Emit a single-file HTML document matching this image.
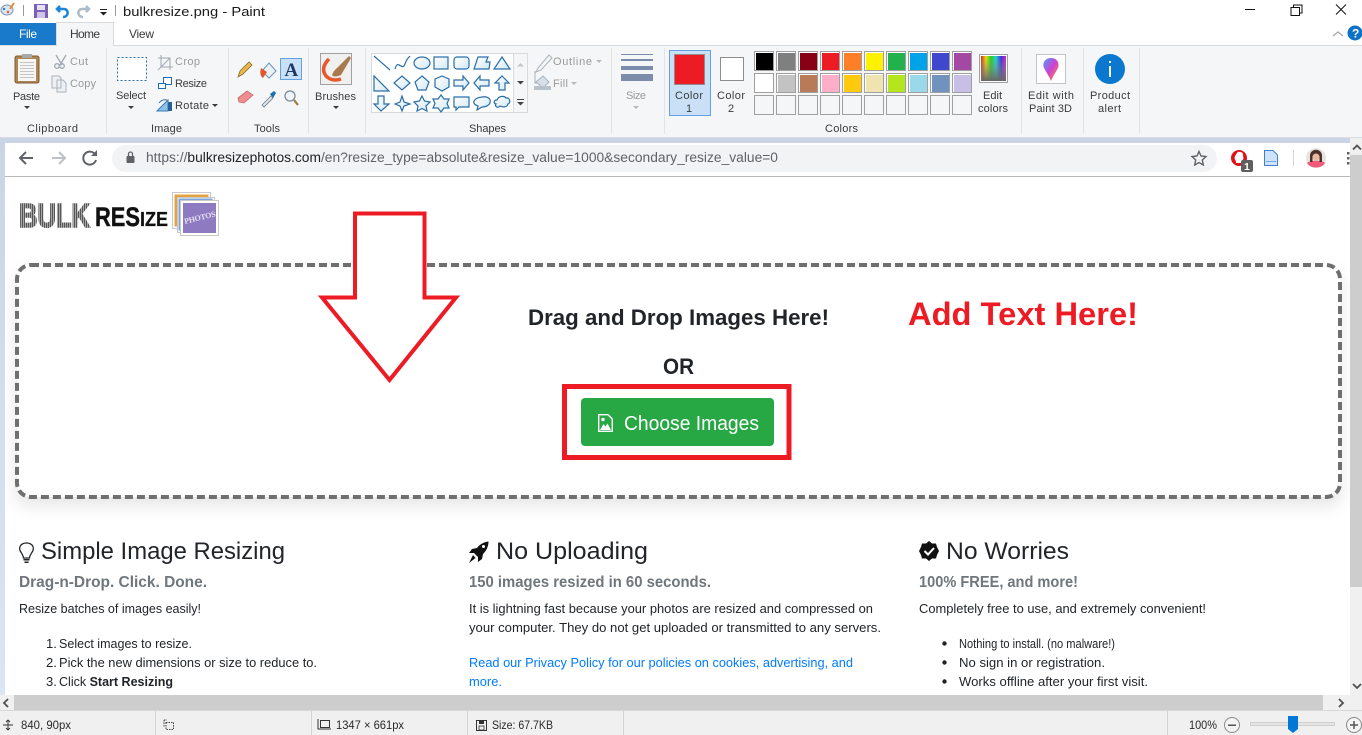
<!DOCTYPE html>
<html><head><meta charset="utf-8"><title>bulkresize.png - Paint</title>
<style>
html,body{margin:0;padding:0;width:1362px;height:735px;overflow:hidden;background:#fff}
svg{display:block}
text{font-family:"Liberation Sans",sans-serif;white-space:pre}
.r{font-size:11px;fill:#3b3b3b}
.d{font-size:11px;fill:#9a9a9a}
.p{font-size:13px;fill:#212529}
.h{font-size:24px;fill:#212529}
.s{font-size:16px;font-weight:bold;fill:#6f767c}
.l{font-size:13px;fill:#007bff}
.st{font-size:12px;fill:#2a2a2a}
.sh{fill:url(#g);stroke:#2a6ea8;stroke-width:1.2}
</style></head><body>
<svg width="1362" height="735" viewBox="0 0 1362 735" xmlns="http://www.w3.org/2000/svg">
<defs>
<linearGradient id="g" x1="0" y1="0" x2="1" y2="1"><stop offset="0" stop-color="#fff"/><stop offset="1" stop-color="#d3e9f5"/></linearGradient>
<linearGradient id="rb" x1="0" y1="0" x2="1" y2="0"><stop offset="0" stop-color="#e02020"/><stop offset=".2" stop-color="#e8e000"/><stop offset=".4" stop-color="#20d020"/><stop offset=".6" stop-color="#20d0d0"/><stop offset=".8" stop-color="#3030e0"/><stop offset="1" stop-color="#e020c0"/></linearGradient>
<linearGradient id="gr" x1="0" y1="0" x2="0" y2="1"><stop offset="0" stop-color="#999" stop-opacity="0"/><stop offset="1" stop-color="#666"/></linearGradient>
<linearGradient id="dr" x1="0" y1="0" x2="1" y2="1"><stop offset="0" stop-color="#4aa0ff"/><stop offset=".5" stop-color="#d040d0"/><stop offset="1" stop-color="#ffa020"/></linearGradient>
<linearGradient id="strip" x1="0" y1="0" x2="0" y2="1"><stop offset="0" stop-color="#c9d5e6"/><stop offset="1" stop-color="#dbe6f4"/></linearGradient>
<pattern id="stripe" width="2" height="2" patternUnits="userSpaceOnUse"><rect width="2" height="2" fill="#a8a8a8"/><rect width="1" height="2" fill="#555"/></pattern>
<filter id="blur" x="-5%" y="-15%" width="110%" height="130%"><feGaussianBlur stdDeviation="8"/></filter>
<clipPath id="pg"><rect x="5" y="177" width="1345" height="518"/></clipPath>
</defs>

<!-- title bar -->
<rect width="1362" height="46" fill="#fff"/>
<g>
<ellipse cx="7" cy="10" rx="6" ry="5" fill="#dfe7ee" stroke="#7d97b5"/><circle cx="4" cy="9" r="1.2" fill="#2a7ad0"/><circle cx="8" cy="12" r="1.2" fill="#e05050"/><path d="M10 9 L14 3" stroke="#e09030" stroke-width="2"/>
<rect x="23" y="5" width="1" height="11" fill="#9a9a9a"/>
<rect x="34" y="4" width="14" height="14" fill="#7a5fb8"/><rect x="37" y="5" width="8" height="5" fill="#e6e0f4"/><rect x="37" y="12" width="8" height="6" fill="#cfc5e6"/>
<path d="M60 6 L57 9 L60 12 M58 9 H64 C69 9 69 17 63 17" fill="none" stroke="#1f86d6" stroke-width="2.6"/>
<path d="M86 6 L89 9 L86 12 M88 9 H82 C77 9 77 17 83 17" fill="none" stroke="#aebccb" stroke-width="2.6"/>
<rect x="100" y="9" width="7" height="1" fill="#222"/><path d="M100 12 H107 L103.500 15.500Z" fill="#222"/>
<rect x="115" y="5" width="1" height="11" fill="#9a9a9a"/>
</g>
<text x="123" y="16" font-size="12.500" fill="#1a1a1a" textLength="142" lengthAdjust="spacingAndGlyphs">bulkresize.png - Paint</text>
<rect x="1245" y="9" width="10" height="1" fill="#111"/>
<path d="M1291 7.500H1299.500V15.500H1291ZM1293.500 7.500V5H1302V13H1299.500" fill="none" stroke="#111"/>
<path d="M1336 4.500L1346 14.500M1346 4.500L1336 14.500" stroke="#111" fill="none"/>

<!-- tabs -->
<rect x="0" y="23" width="56" height="22" fill="#1979ca"/>
<text x="19" y="38" font-size="12" fill="#fff" textLength="18">File</text>
<path d="M56.500 45V22.500H113.500V45" fill="#f5f6f7" stroke="#dadbdc"/>
<text x="70" y="38" font-size="12" fill="#3b3b3b" textLength="30">Home</text>
<text x="129" y="38" font-size="12" fill="#3b3b3b" textLength="25">View</text>
<path d="M1333 36L1338 32L1343 36" fill="none" stroke="#a8a8a8" stroke-width="1.300"/>
<circle cx="1355" cy="33" r="7.500" fill="#0b72c6"/><text x="1352" y="37.500" font-size="12" font-weight="bold" fill="#fff">?</text>

<!-- ribbon -->
<rect x="0" y="46" width="1362" height="92" fill="#f5f6f7"/>
<rect x="0" y="45" width="1362" height="1" fill="#dadbdc"/><rect x="57" y="45" width="56" height="1" fill="#f5f6f7"/>
<g fill="#e2e3e4"><rect x="106" y="48" width="1" height="86"/><rect x="228" y="48" width="1" height="86"/><rect x="308" y="48" width="1" height="86"/><rect x="365" y="48" width="1" height="86"/><rect x="611" y="48" width="1" height="86"/><rect x="664" y="48" width="1" height="86"/><rect x="1021" y="48" width="1" height="86"/><rect x="1083" y="48" width="1" height="86"/><rect x="1139" y="48" width="1" height="86"/></g>

<!-- clipboard -->
<rect x="15" y="56" width="24" height="27" rx="2" fill="#b08552" stroke="#7a5a35"/><rect x="18" y="59" width="18" height="22" fill="#f6f6f6"/><rect x="22" y="54" width="10" height="4" fill="#a8a8a8"/>
<g fill="#c4c4c4"><rect x="20" y="62" width="14" height="1"/><rect x="20" y="65" width="14" height="1"/><rect x="20" y="68" width="14" height="1"/><rect x="20" y="71" width="14" height="1"/><rect x="20" y="74" width="14" height="1"/><rect x="20" y="77" width="14" height="1"/></g>
<text x="13" y="100" class="r" textLength="27">Paste</text><path d="M24 106H30L27 109Z" fill="#3b3b3b"/>
<path d="M56 55L62 65M66 55L60 65" stroke="#9fa8b3" stroke-width="1.300" fill="none"/><circle cx="57" cy="66" r="2.300" fill="none" stroke="#9fa8b3" stroke-width="1.300"/><circle cx="62" cy="66" r="2.300" fill="none" stroke="#9fa8b3" stroke-width="1.300"/>
<text x="70" y="65" class="d" textLength="18">Cut</text>
<path d="M52 76H59L61 78V88H52Z M57 80H63L66 83V92H57Z" fill="#eef1f4" stroke="#a9b3bd"/>
<text x="70" y="87" class="d" textLength="26">Copy</text>
<text x="27" y="132" class="r" textLength="51">Clipboard</text>

<!-- image -->
<rect x="117.500" y="57.500" width="29" height="23" fill="#fff" stroke="#2a6ea8" stroke-dasharray="2 2"/>
<text x="116" y="99" class="r" textLength="30">Select</text><path d="M128 106H134L131 109Z" fill="#3b3b3b"/>
<path d="M158 58H170V70M161 55V67H173M158 70L170 58" fill="none" stroke="#9fa8b3"/>
<text x="175" y="65" class="d" textLength="25">Crop</text>
<rect x="163.500" y="77.500" width="8" height="7" fill="#fff" stroke="#1e6bb0"/><rect x="158.500" y="83.500" width="7" height="5" fill="#fff" stroke="#1e6bb0"/>
<text x="175" y="87" class="r" textLength="32">Resize</text>
<path d="M157 111L168 100V111Z" fill="#8fc2e8" stroke="#3a7cb8"/><path d="M159 103Q162 99 167 100" fill="none" stroke="#2a6ea8"/><rect x="168" y="102" width="4" height="9" fill="#2a5f96"/>
<text x="175" y="109" class="r" textLength="34">Rotate</text><path d="M212 104H218L215 107Z" fill="#3b3b3b"/>
<text x="151" y="132" class="r" textLength="31">Image</text>

<!-- tools -->
<path d="M238 77L240 71L249 62L252 65L243 74Z" fill="#e8b84a" stroke="#8a6a2a" stroke-width=".8"/>
<path d="M262 71L269 63L276 71L269 78Z" fill="#eaf2f8" stroke="#6a93b8"/><path d="M261 68Q259 75 263 78L267 72Z" fill="#e2552a"/>
<rect x="280.500" y="58.500" width="21" height="21" fill="#c9e0f7" stroke="#62a2e4"/>
<text x="284.500" y="76" font-size="19" font-weight="bold" fill="#1b3a66" style="font-family:'Liberation Serif',serif">A</text>
<path d="M238 98L247 91L253 95L244 103L239 102Z" fill="#ee8c90" stroke="#c56a6a" stroke-width=".8"/>
<path d="M262 105L271 96L273 98L264 107Z" fill="#dfe7ee" stroke="#6a7a8a" stroke-width=".8"/><path d="M270 94L274 91L276 93L273 98Z" fill="#1c6fb0"/>
<circle cx="290" cy="96" r="5" fill="#eef4f9" stroke="#7a8a99" stroke-width="1.300"/><path d="M294 100L298 105" stroke="#a07a45" stroke-width="2.200"/>
<text x="254" y="132" class="r" textLength="26">Tools</text>

<!-- brushes -->
<rect x="320.500" y="53.500" width="31" height="31" fill="#f0f0f0" stroke="#a0a0a0"/>
<path d="M329 59Q320 68 326 76Q332 82 341 79" fill="none" stroke="#e8582a" stroke-width="3.500"/><path d="M334 71L345 60L349 56L351 58L341 75Q334 78 332 75Z" fill="#a87a4e"/>
<text x="315" y="100" class="r" textLength="41">Brushes</text><path d="M333 106H339L336 109Z" fill="#3b3b3b"/>

<!-- shapes -->
<rect x="371.500" y="53.500" width="142" height="59" fill="#fff" stroke="#d8dadc"/><rect x="513.500" y="53.500" width="14" height="59" fill="#f5f6f7" stroke="#d8dadc"/>
<path d="M517 66.500L520.500 63L524 66.500Z" fill="#c5c5c5"/><path d="M517 81H524L520.500 84.500Z" fill="#444"/><rect x="517" y="99" width="7" height="1" fill="#444"/><path d="M517 102H524L520.500 105.500Z" fill="#444"/>
<g fill="none" stroke="#2a6ea8" stroke-width="1.200"><path d="M374 56L390 70"/><path d="M395 69C398 58 402 72 405 64S409 58 410 56"/></g>
<g>
<ellipse class="sh" cx="422" cy="63" rx="8" ry="6"/><rect class="sh" x="434" y="57" width="14" height="12"/><rect class="sh" x="454" y="57" width="15" height="12" rx="3"/><path class="sh" d="M478 57H488L486 62H490L489 69H474Z"/><path class="sh" d="M502 57L510 69H494Z"/>
<path class="sh" d="M374 76V91H389Z"/><path class="sh" d="M402 76L410 83L402 90L394 83Z"/><path class="sh" d="M422 76L429 82L426 90H418L415 82Z"/><path class="sh" d="M442 76L449 79V87L442 91L435 87V79Z"/><path class="sh" d="M454 80H463V76L469 83L463 90V86H454Z"/><path class="sh" d="M489 80H480V76L474 83L480 90V86H489Z"/><path class="sh" d="M502 76L509 83H505V90H499V83H495Z"/>
<path class="sh" d="M378 96H384V104H389L381 111L374 104H378Z"/><path class="sh" d="M402 96L404 102L410 104L404 106L402 111L400 106L395 104L400 102Z"/><path class="sh" d="M422 96L424.500 101L430 102L426 106L427 111L422 108.500L417 111L418 106L414 102L419.500 101Z"/><path class="sh" d="M441 95L444 99L449 99L447 103.500L449 108L444 108L441 112L438 108L433 108L435 103.500L433 99L438 99Z"/><path class="sh" d="M454 97H469V107H459L456 110V107H454Z"/><path class="sh" d="M482 97C493 95 493 107 482 107L477 110L478 106C471 104 473 98 482 97Z"/><path class="sh" d="M497 100C499 95 505 96 506 98C510 97 511 103 508 104C507 108 502 107 500 106C497 109 494 105 496 104C493 103 494 100 497 100Z"/>
</g>
<path d="M535 71V83H547M549 55L538 68L536 72L541 70L552 58Z" fill="none" stroke="#a9b3bd"/>
<text x="553" y="65" class="d" textLength="39">Outline</text><path d="M596 60H602L599 63Z" fill="#b8b8b8"/>
<path d="M536 82L543 76L549 82L543 88Z" fill="#d8dfe6" stroke="#a9b3bd"/><rect x="534" y="86" width="17" height="4" fill="#b9c2cb"/>
<text x="553" y="87" class="d" textLength="15">Fill</text><path d="M571 82H577L574 85Z" fill="#b8b8b8"/>
<text x="469" y="132" class="r" textLength="37">Shapes</text>

<!-- size -->
<g fill="#7c8cab"><rect x="621" y="54" width="32" height="1"/><rect x="621" y="59" width="32" height="2"/><rect x="621" y="66" width="32" height="4"/><rect x="621" y="74" width="32" height="7"/></g>
<text x="626" y="99" class="d" textLength="20">Size</text><path d="M633 106H639L636 109Z" fill="#b8b8b8"/>

<!-- colors -->
<rect x="669.500" y="50.500" width="41" height="65" fill="#c9e0f7" stroke="#62a2e4"/>
<rect x="674.500" y="54.500" width="30" height="30" fill="#ed1c24" stroke="#8d8d8d" stroke-width="1"/>
<text x="675" y="99" class="r" textLength="28">Color</text><text x="686" y="112" class="r">1</text>
<rect x="720.500" y="57.500" width="23" height="23" fill="#fff" stroke="#8d8d8d"/>
<text x="717" y="99" class="r" textLength="28">Color</text><text x="728" y="112" class="r">2</text>
<text x="825" y="132" class="r" textLength="33">Colors</text>

<g stroke="#a0a0a0" fill="#fff">
<rect x="754.500" y="51.500" width="19" height="19"/><rect x="776.500" y="51.500" width="19" height="19"/><rect x="798.500" y="51.500" width="19" height="19"/><rect x="820.500" y="51.500" width="19" height="19"/><rect x="842.500" y="51.500" width="19" height="19"/><rect x="864.500" y="51.500" width="19" height="19"/><rect x="886.500" y="51.500" width="19" height="19"/><rect x="908.500" y="51.500" width="19" height="19"/><rect x="930.500" y="51.500" width="19" height="19"/><rect x="952.500" y="51.500" width="19" height="19"/>
<rect x="754.500" y="73.500" width="19" height="19"/><rect x="776.500" y="73.500" width="19" height="19"/><rect x="798.500" y="73.500" width="19" height="19"/><rect x="820.500" y="73.500" width="19" height="19"/><rect x="842.500" y="73.500" width="19" height="19"/><rect x="864.500" y="73.500" width="19" height="19"/><rect x="886.500" y="73.500" width="19" height="19"/><rect x="908.500" y="73.500" width="19" height="19"/><rect x="930.500" y="73.500" width="19" height="19"/><rect x="952.500" y="73.500" width="19" height="19"/>
<rect x="754.500" y="95.500" width="19" height="19" fill="#f5f6f7"/><rect x="776.500" y="95.500" width="19" height="19" fill="#f5f6f7"/><rect x="798.500" y="95.500" width="19" height="19" fill="#f5f6f7"/><rect x="820.500" y="95.500" width="19" height="19" fill="#f5f6f7"/><rect x="842.500" y="95.500" width="19" height="19" fill="#f5f6f7"/><rect x="864.500" y="95.500" width="19" height="19" fill="#f5f6f7"/><rect x="886.500" y="95.500" width="19" height="19" fill="#f5f6f7"/><rect x="908.500" y="95.500" width="19" height="19" fill="#f5f6f7"/><rect x="930.500" y="95.500" width="19" height="19" fill="#f5f6f7"/><rect x="952.500" y="95.500" width="19" height="19" fill="#f5f6f7"/>
</g>
<rect x="756" y="53" width="17" height="17" fill="#000"/><rect x="778" y="53" width="17" height="17" fill="#7f7f7f"/><rect x="800" y="53" width="17" height="17" fill="#880015"/><rect x="822" y="53" width="17" height="17" fill="#ed1c24"/><rect x="844" y="53" width="17" height="17" fill="#ff7f27"/><rect x="866" y="53" width="17" height="17" fill="#fff200"/><rect x="888" y="53" width="17" height="17" fill="#22b14c"/><rect x="910" y="53" width="17" height="17" fill="#00a2e8"/><rect x="932" y="53" width="17" height="17" fill="#3f48cc"/><rect x="954" y="53" width="17" height="17" fill="#a349a4"/>
<rect x="756" y="75" width="17" height="17" fill="#fff"/><rect x="778" y="75" width="17" height="17" fill="#c3c3c3"/><rect x="800" y="75" width="17" height="17" fill="#b97a57"/><rect x="822" y="75" width="17" height="17" fill="#ffaec9"/><rect x="844" y="75" width="17" height="17" fill="#ffc90e"/><rect x="866" y="75" width="17" height="17" fill="#efe4b0"/><rect x="888" y="75" width="17" height="17" fill="#b5e61d"/><rect x="910" y="75" width="17" height="17" fill="#99d9ea"/><rect x="932" y="75" width="17" height="17" fill="#7092be"/><rect x="954" y="75" width="17" height="17" fill="#c8bfe7"/>

<rect x="979.500" y="54.500" width="28" height="28" fill="#fff" stroke="#a0a0a0"/>
<rect x="981" y="56" width="25" height="25" fill="url(#rb)"/><rect x="981" y="56" width="25" height="25" fill="url(#gr)"/>
<text x="983" y="99" class="r" textLength="19">Edit</text><text x="978" y="112" class="r" textLength="30">colors</text>

<rect x="1036.500" y="54.500" width="29" height="29" fill="#fff" stroke="#c4c4c4"/>
<path d="M1051 58C1057 58 1060 63 1058 68C1056 72 1053 76 1051 81C1049 76 1046 72 1044 68C1042 63 1045 58 1051 58Z" fill="url(#dr)"/>
<text x="1028" y="99" class="r" textLength="46">Edit with</text><text x="1029" y="112" class="r" textLength="43">Paint 3D</text>

<circle cx="1110" cy="69" r="15" fill="#0a78ce"/><rect x="1109" y="66" width="2" height="11" fill="#fff"/><rect x="1109" y="61" width="2" height="2" fill="#fff"/>
<text x="1090" y="99" class="r" textLength="40">Product</text><text x="1098" y="112" class="r" textLength="23">alert</text>

<!-- workspace -->
<rect x="0" y="138" width="1362" height="557" fill="#c9d5e6"/>
<rect x="0" y="143" width="5" height="552" fill="url(#strip)"/>
<rect x="0" y="137" width="1362" height="1" fill="#d9dde3"/>
<rect x="5" y="143" width="1345" height="552" fill="#fff"/>

<!-- browser toolbar -->
<rect x="5" y="176" width="1345" height="1" fill="#b8b8b8"/>
<path d="M33 158H20M26 152L20 158L26 164" fill="none" stroke="#5f6368" stroke-width="2"/>
<path d="M52 158H65M59 152L65 158L59 164" fill="none" stroke="#bdc1c6" stroke-width="2"/>
<path d="M95.500 155A6.500 6.500 0 1 0 96 160" fill="none" stroke="#5f6368" stroke-width="2"/><path d="M97 150V156H91Z" fill="#5f6368"/>
<rect x="112" y="145" width="1105" height="27" rx="13.500" fill="#f1f3f4"/>
<rect x="126.500" y="156" width="8" height="7" rx="1" fill="#5f6368"/><path d="M128.500 156V154A2 2 0 0 1 132.500 154V156" fill="none" stroke="#5f6368" stroke-width="1.300"/>
<text x="146" y="162" font-size="13.500" fill="#5f6368" textLength="632" lengthAdjust="spacingAndGlyphs">https://<tspan fill="#202124">bulkresizephotos.com</tspan>/en?resize_type=absolute&amp;resize_value=1000&amp;secondary_resize_value=0</text>
<path d="M1199 151.500L1201 156L1206 156.500L1202.300 160L1203.300 165L1199 162.500L1194.700 165L1195.700 160L1192 156.500L1197 156Z" fill="none" stroke="#5f6368" stroke-width="1.400"/>
<circle cx="1239" cy="158" r="6.200" fill="none" stroke="#e0121a" stroke-width="3.600"/>
<path d="M1236 163V154.500Q1238 151 1240 152Q1243 152 1243 155V163Z" fill="#fff"/><rect x="1241" y="160" width="12" height="12" rx="2" fill="#5f5f5f"/>
<text x="1244" y="170" font-size="10.500" font-weight="bold" fill="#fff">1</text>
<path d="M1264.500 150.500H1273L1277.500 155V165.500H1264.500Z" fill="#cfe2fa" stroke="#3f7fd0"/><rect x="1266" y="161" width="10" height="1" fill="#6aaaf0"/>
<rect x="1293" y="150" width="1" height="16" fill="#d4d4d4"/>
<circle cx="1316" cy="158" r="10" fill="#e8e4e2"/><path d="M1307 163C1309 160 1323 160 1325 163C1322 169 1310 169 1307 163Z" fill="#ef5a78"/><path d="M1310 162V155C1311 148 1321 148 1322 155V162L1319.500 162V156H1312.500V162Z" fill="#4a322a"/><circle cx="1316" cy="157" r="3.500" fill="#e8b8a0"/>
<g fill="#5f6368"><rect x="1347" y="152" width="2.500" height="2.500"/><rect x="1347" y="157" width="2.500" height="2.500"/><rect x="1347" y="162" width="2.500" height="2.500"/></g>

<!-- logo -->
<text x="19" y="227" font-size="33" font-weight="bold" fill="url(#stripe)" stroke="url(#stripe)" stroke-width="1.600" textLength="71" lengthAdjust="spacingAndGlyphs">BULK</text>
<text x="95" y="226" font-size="27" font-weight="bold" fill="#111" stroke="#111" stroke-width=".4" textLength="45" lengthAdjust="spacingAndGlyphs">RES</text>
<text x="140" y="226" font-size="20" font-weight="bold" fill="#111" stroke="#111" stroke-width=".3" textLength="28" lengthAdjust="spacingAndGlyphs">IZE</text>
<rect x="172.500" y="192.500" width="38" height="36" fill="#fff" stroke="#c8c8c8"/><rect x="174.500" y="194.500" width="34" height="32" fill="#e5a33d"/>
<rect x="177.500" y="197.500" width="37" height="35" fill="#fff" stroke="#c8c8c8"/><rect x="178.500" y="198.500" width="34" height="32" fill="#7ea6dc"/>
<rect x="180.500" y="200.500" width="38" height="35" fill="#fff" stroke="#c8c8c8"/><rect x="183" y="203" width="33" height="30" fill="#8d7ac0"/>
<text x="185" y="224" font-size="8" font-weight="bold" fill="#e6e0f4" textLength="32" transform="rotate(-14 185 224)" style="font-family:'Liberation Serif',serif">PHOTOS</text>

<!-- dropzone -->
<g clip-path="url(#pg)"><rect x="15" y="271" width="1327" height="236" rx="14" fill="#000" opacity=".09" filter="url(#blur)"/></g>
<rect x="17" y="265" width="1323" height="232" rx="14" fill="#fff"/>
<rect x="17" y="265" width="1323" height="232" rx="14" fill="none" stroke="#6f6f6f" stroke-width="4" stroke-dasharray="8 4"/>

<text x="528" y="325" font-size="22" font-weight="bold" fill="#212529" textLength="301" lengthAdjust="spacingAndGlyphs">Drag and Drop Images Here!</text>
<text x="663" y="374" font-size="22" font-weight="bold" fill="#212529" textLength="31" lengthAdjust="spacingAndGlyphs">OR</text>
<text x="908" y="325" font-size="32" font-weight="bold" fill="#ed1c24" textLength="230" lengthAdjust="spacingAndGlyphs">Add Text Here!</text>

<path d="M355 213.500H424.500V297.500H456L389.500 380L322 297.500H355Z" fill="#fff" stroke="#ed1c24" stroke-width="4"/>

<rect x="564.500" y="386.500" width="224.500" height="71" fill="#fff" stroke="#ed1c24" stroke-width="5"/>
<rect x="581" y="398" width="193" height="48" rx="4" fill="#28a745"/>
<path d="M598.700 414.700H608L612.300 419V431.300H598.700Z" fill="none" stroke="#fff" stroke-width="1.400"/><path d="M600 430L603.500 424L605.500 426.500L607.500 423.500L611 430Z" fill="#fff"/><circle cx="603" cy="419.500" r="1.700" fill="#fff"/>
<text x="624" y="430" font-size="20" fill="#fff" textLength="135" lengthAdjust="spacingAndGlyphs">Choose Images</text>

<!-- col 1 -->
<path d="M22 553C18 548 21 543 27 543C33 543 36 548 32 553C31 555 30 556 30 558H24C24 556 23 555 22 553Z" fill="none" stroke="#212529" stroke-width="1.300" transform="translate(-.5 0)"/><rect x="23.500" y="559" width="6" height="1.500" fill="#212529"/><rect x="24.500" y="561.500" width="4" height="1.500" fill="#212529"/>
<text x="41" y="559" class="h" textLength="244" lengthAdjust="spacingAndGlyphs">Simple Image Resizing</text>
<text x="19" y="587" class="s" textLength="188" lengthAdjust="spacingAndGlyphs">Drag-n-Drop. Click. Done.</text>
<text x="19" y="613" class="p" textLength="182" lengthAdjust="spacingAndGlyphs">Resize batches of images easily!</text>
<text x="46" y="648" class="p">1.</text><text x="59" y="648" class="p" textLength="133" lengthAdjust="spacingAndGlyphs">Select images to resize.</text>
<text x="46" y="667" class="p">2.</text><text x="59" y="667" class="p" textLength="258" lengthAdjust="spacingAndGlyphs">Pick the new dimensions or size to reduce to.</text>
<text x="46" y="686" class="p">3.</text><text x="59" y="686" class="p" textLength="114" lengthAdjust="spacingAndGlyphs">Click <tspan font-weight="bold">Start Resizing</tspan></text>

<!-- col 2 -->
<path d="M488.500 541.500C484 542 480 544 477 548L472 549L469 553L474 553L478 557L478 562L482 559L483 554C486.500 551 488.500 546 488.500 541.500Z" fill="#111"/><path d="M473 555L475.500 558L469 563Z" fill="#111"/><circle cx="483.500" cy="546.500" r="1.500" fill="#fff"/>
<text x="496" y="559" class="h" textLength="152" lengthAdjust="spacingAndGlyphs">No Uploading</text>
<text x="469" y="587" class="s" textLength="242" lengthAdjust="spacingAndGlyphs">150 images resized in 60 seconds.</text>
<text x="469" y="613" class="p" textLength="404" lengthAdjust="spacingAndGlyphs">It is lightning fast because your photos are resized and compressed on</text>
<text x="469" y="632" class="p" textLength="412" lengthAdjust="spacingAndGlyphs">your computer. They do not get uploaded or transmitted to any servers.</text>
<text x="469" y="667" class="l" textLength="384" lengthAdjust="spacingAndGlyphs">Read our Privacy Policy for our policies on cookies, advertising, and</text>
<text x="469" y="686" class="l" textLength="33" lengthAdjust="spacingAndGlyphs">more.</text>

<!-- col 3 -->
<path d="M929 541L932 543.500L936 543.500L937 547L939 551L937 555L936 558.500L932 558.500L929 561L926 558.500L922 558.500L921 555L919 551L921 547L922 543.500L926 543.500Z" fill="#111"/><path d="M924.500 551L928 554.500L934 548" fill="none" stroke="#fff" stroke-width="2"/>
<text x="946" y="559" class="h" textLength="123" lengthAdjust="spacingAndGlyphs">No Worries</text>
<text x="919" y="587" class="s" textLength="159" lengthAdjust="spacingAndGlyphs">100% FREE, and more!</text>
<text x="919" y="613" class="p" textLength="287" lengthAdjust="spacingAndGlyphs">Completely free to use, and extremely convenient!</text>
<circle cx="944.500" cy="643.500" r="2.200" fill="#212529"/><text x="959" y="648" class="p" textLength="156" lengthAdjust="spacingAndGlyphs">Nothing to install. (no malware!)</text>
<circle cx="944.500" cy="662.500" r="2.200" fill="#212529"/><text x="959" y="667" class="p" textLength="146" lengthAdjust="spacingAndGlyphs">No sign in or registration.</text>
<circle cx="944.500" cy="681.500" r="2.200" fill="#212529"/><text x="959" y="686" class="p" textLength="189" lengthAdjust="spacingAndGlyphs">Works offline after your first visit.</text>

<!-- scrollbars -->
<rect x="1350" y="138" width="12" height="557" fill="#f0f0f0"/>
<rect x="1350" y="155" width="12" height="432" fill="#cdcdcd"/>
<path d="M1353 149.500L1357 145.500L1361 149.500" fill="none" stroke="#505050" stroke-width="1.800"/>
<path d="M1353 684L1357 688L1361 684" fill="none" stroke="#505050" stroke-width="1.800"/>
<rect x="0" y="695" width="1362" height="15" fill="#f0f0f0"/>
<rect x="14" y="695" width="1309" height="15" fill="#cdcdcd"/>
<path d="M8 699L4 703L8 707" fill="none" stroke="#505050" stroke-width="1.800"/>
<path d="M1339 699L1343 703L1339 707" fill="none" stroke="#505050" stroke-width="1.800"/>

<!-- status bar -->
<rect x="0" y="710" width="1362" height="25" fill="#f0f0f0"/>
<rect x="0" y="710" width="1362" height="1" fill="#d8d8d8"/>
<g fill="#d4d4d4"><rect x="155" y="711" width="1" height="24"/><rect x="311" y="711" width="1" height="24"/><rect x="467" y="711" width="1" height="24"/><rect x="623" y="711" width="1" height="24"/><rect x="1167" y="711" width="1" height="24"/></g>
<path d="M3 725H13M8 720V730M6 722L8 720L10 722M6 728L8 730L10 728" fill="none" stroke="#333" stroke-width=".9"/>
<text x="21" y="729" class="st" textLength="50" lengthAdjust="spacingAndGlyphs">840, 90px</text>
<path d="M164 720H167M164 720V727M166 722.500H173.500V729.500H166Z" fill="none" stroke="#444" stroke-dasharray="1.500 1"/>
<path d="M318 719V729H331" fill="none" stroke="#333"/><rect x="320.500" y="720.500" width="9" height="7" fill="none" stroke="#333"/>
<text x="336" y="729" class="st" textLength="68" lengthAdjust="spacingAndGlyphs">1347 × 661px</text>
<rect x="476.500" y="720.500" width="10" height="10" fill="none" stroke="#333"/><rect x="479" y="721" width="5" height="3" fill="#333"/><rect x="479" y="726" width="5" height="4" fill="none" stroke="#333" stroke-width=".8"/>
<text x="492" y="729" class="st" textLength="61" lengthAdjust="spacingAndGlyphs">Size: 67.7KB</text>
<text x="1189" y="729" class="st" textLength="28" lengthAdjust="spacingAndGlyphs">100%</text>
<circle cx="1232" cy="725" r="7.500" fill="#f4f4f4" stroke="#8a8a8a"/><rect x="1228" y="724.500" width="8" height="1.500" fill="#555"/>
<rect x="1250.500" y="722.500" width="84" height="3" fill="#e4e4e4" stroke="#cfcfcf"/>
<path d="M1288 716H1298V729L1293 733L1288 729Z" fill="#0078d7"/>
<circle cx="1354" cy="725" r="7.500" fill="#f4f4f4" stroke="#8a8a8a"/><path d="M1350 725H1358M1354 721V729" stroke="#555" stroke-width="1.500"/>
</svg>
</body></html>
